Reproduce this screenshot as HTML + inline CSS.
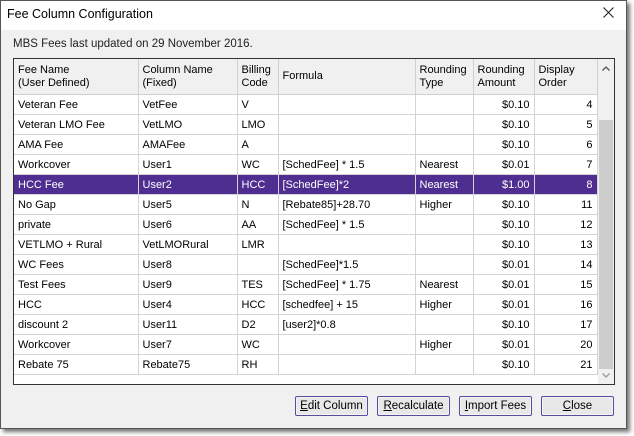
<!DOCTYPE html><html><head><style>
body{margin:0;width:634px;height:436px;background:#fff;font-family:"Liberation Sans",sans-serif;font-size:11px;color:#000;position:relative;overflow:hidden}
.win{position:absolute;left:0;top:0;width:625px;height:427px;border:1px solid #555;background:#f0f0f0;box-shadow:3px 3px 4px rgba(0,0,0,.55)}
.title{position:absolute;left:0;top:0;width:625px;height:29px;background:#fff}
.title span{position:absolute;left:6px;top:6px;font-size:12.5px}
.x{position:absolute;right:12px;top:6px}
.upd{position:absolute;left:12px;top:37px;font-size:11.5px;color:#222}
.grid{position:absolute;left:12px;top:57px;width:600px;height:325px;border:1px solid #333;background:#fff;overflow:hidden}
table{border-collapse:collapse;position:absolute;left:0;top:0;table-layout:fixed}
td{border-right:1px solid #d4d4d4;border-bottom:1px solid #d4d4d4;height:19px;padding:0 4px;white-space:nowrap;overflow:hidden;font-size:11px}
tr.h td{height:35px;background:#f0f0f0;border-color:#d0d0d0;line-height:13px;vertical-align:middle}
td.r{text-align:right}
tr.sel td{background:#4e2f91;color:#fff}
.sb{position:absolute;left:584px;top:0;width:16px;height:325px;background:#f0f0f0}
.thumb{position:absolute;left:1px;top:61px;width:14px;height:249px;background:#cdcdcd}
.btn{position:absolute;top:395px;height:18px;border:1px solid #5a4aa0;border-radius:2px;background:#e8e8e8;text-align:center;line-height:18px;font-size:11.5px;box-shadow:inset 0 0 0 1px #f4f4f4}
</style></head><body>
<div class="win">
<div class="title"><span>Fee Column Configuration</span><svg class="x" width="11" height="11" viewBox="0 0 11 11"><path d="M0.5 0.5L10.5 10.5M10.5 0.5L0.5 10.5" stroke="#222" stroke-width="1.1"/></svg></div>
<div class="upd">MBS Fees last updated on 29 November 2016.</div>
<div class="grid">
<table>
<colgroup><col style="width:124px"><col style="width:99px"><col style="width:41px"><col style="width:137px"><col style="width:58px"><col style="width:61px"><col style="width:63px"></colgroup>
<tr class="h"><td>Fee Name<br>(User Defined)</td><td>Column Name<br>(Fixed)</td><td>Billing<br>Code</td><td>Formula</td><td>Rounding<br>Type</td><td>Rounding<br>Amount</td><td>Display<br>Order</td></tr>
<tr><td>Veteran Fee</td><td>VetFee</td><td>V</td><td></td><td></td><td class="r">$0.10</td><td class="r">4</td></tr>
<tr><td>Veteran LMO Fee</td><td>VetLMO</td><td>LMO</td><td></td><td></td><td class="r">$0.10</td><td class="r">5</td></tr>
<tr><td>AMA Fee</td><td>AMAFee</td><td>A</td><td></td><td></td><td class="r">$0.10</td><td class="r">6</td></tr>
<tr><td>Workcover</td><td>User1</td><td>WC</td><td>[SchedFee] * 1.5</td><td>Nearest</td><td class="r">$0.01</td><td class="r">7</td></tr>
<tr class="sel"><td>HCC Fee</td><td>User2</td><td>HCC</td><td>[SchedFee]*2</td><td>Nearest</td><td class="r">$1.00</td><td class="r">8</td></tr>
<tr><td>No Gap</td><td>User5</td><td>N</td><td>[Rebate85]+28.70</td><td>Higher</td><td class="r">$0.10</td><td class="r">11</td></tr>
<tr><td>private</td><td>User6</td><td>AA</td><td>[SchedFee] * 1.5</td><td></td><td class="r">$0.10</td><td class="r">12</td></tr>
<tr><td>VETLMO + Rural</td><td>VetLMORural</td><td>LMR</td><td></td><td></td><td class="r">$0.10</td><td class="r">13</td></tr>
<tr><td>WC Fees</td><td>User8</td><td></td><td>[SchedFee]*1.5</td><td></td><td class="r">$0.01</td><td class="r">14</td></tr>
<tr><td>Test Fees</td><td>User9</td><td>TES</td><td>[SchedFee] * 1.75</td><td>Nearest</td><td class="r">$0.01</td><td class="r">15</td></tr>
<tr><td>HCC</td><td>User4</td><td>HCC</td><td>[schedfee] + 15</td><td>Higher</td><td class="r">$0.01</td><td class="r">16</td></tr>
<tr><td>discount 2</td><td>User11</td><td>D2</td><td>[user2]*0.8</td><td></td><td class="r">$0.10</td><td class="r">17</td></tr>
<tr><td>Workcover</td><td>User7</td><td>WC</td><td></td><td>Higher</td><td class="r">$0.01</td><td class="r">20</td></tr>
<tr><td>Rebate 75</td><td>Rebate75</td><td>RH</td><td></td><td></td><td class="r">$0.10</td><td class="r">21</td></tr>
</table>
<div class="sb"><svg style="position:absolute;top:7px;left:4px" width="8" height="5"><path d="M0.5 4.5L4 1L7.5 4.5" stroke="#555" fill="none" stroke-width="1.3"/></svg><div class="thumb"></div><svg style="position:absolute;top:314px;left:4px" width="8" height="5"><path d="M0.5 0.5L4 4L7.5 0.5" stroke="#999" fill="none" stroke-width="1.3"/></svg></div>
</div>
<div class="btn" style="left:294px;width:71px"><u>E</u>dit Column</div>
<div class="btn" style="left:376px;width:71px"><u>R</u>ecalculate</div>
<div class="btn" style="left:458px;width:71px"><u>I</u>mport Fees</div>
<div class="btn" style="left:540px;width:71px"><u>C</u>lose</div>
</div>
</body></html>
